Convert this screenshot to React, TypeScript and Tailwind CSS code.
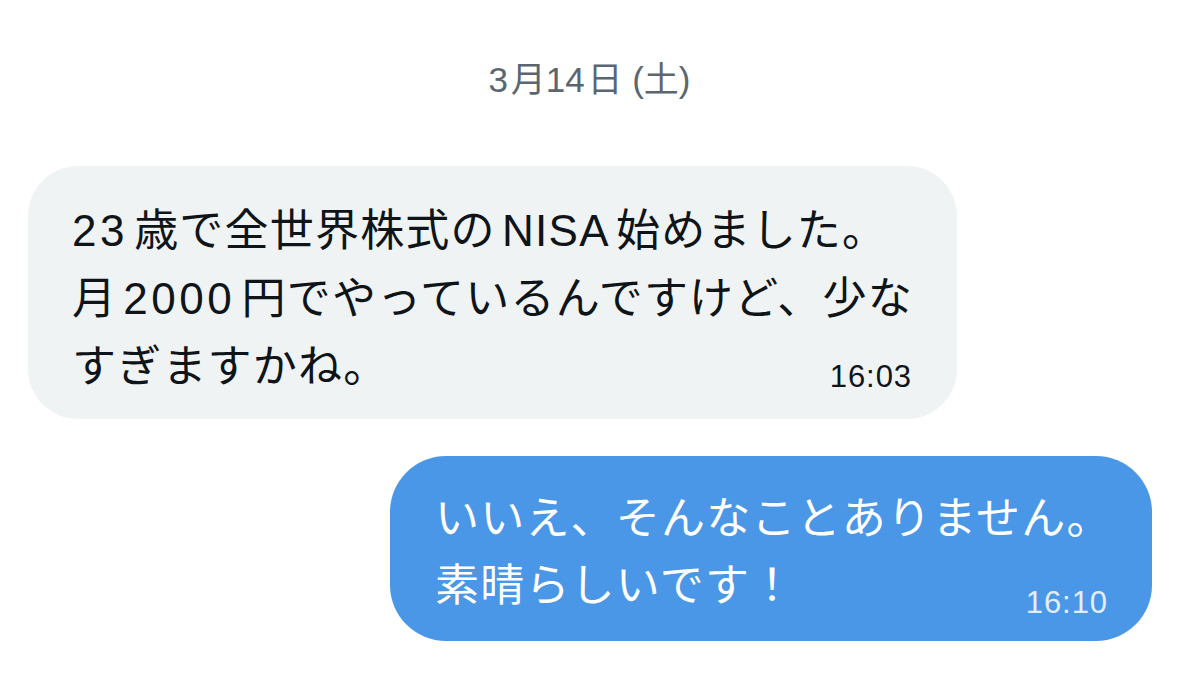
import React from "react"

const font = { fontFamily: '"Liberation Sans", "Noto Sans CJK JP", sans-serif' }

// latin runs get a little breathing room next to kana/kanji, like iOS does
const L: React.FC<{ children: React.ReactNode; first?: boolean; digits?: boolean }> = ({ children, first, digits }) => (
    <span
        className={[
            first ? "mr-[0.14em]" : "mx-[0.14em]",
            digits ? "tracking-[0.08em]" : "tracking-[0.03em]",
        ].join(" ")}
    >
        {children}
    </span>
)

const Received: React.FC<{ lines: React.ReactNode[]; time: string }> = ({ lines, time }) => {
    const last = lines[lines.length - 1]
    return (
        <div className="w-[929px] rounded-[50px] bg-[#eff3f4] pl-[44px] pr-[45px] pt-[31px] pb-[18px] text-[44px] leading-[68px] tracking-[1.2px] text-[#0f1419]">
            {lines.slice(0, -1).map((l, i) => (
                <div key={i} className="whitespace-nowrap">{l}</div>
            ))}
            <div className="flex items-end justify-between">
                <span className="whitespace-nowrap">{last}</span>
                <span className="text-[31px] leading-[36px] mb-[6px] tracking-[0.03em]">{time}</span>
            </div>
        </div>
    )
}

const Sent: React.FC<{ lines: React.ReactNode[]; time: string }> = ({ lines, time }) => {
    const last = lines[lines.length - 1]
    return (
        <div className="w-[762px] rounded-[56px] bg-[#4a97e7] pl-[45px] pr-[44px] pt-[29px] pb-[22px] text-[44px] leading-[67px] tracking-[1.2px] text-white">
            {lines.slice(0, -1).map((l, i) => (
                <div key={i} className="whitespace-nowrap">{l}</div>
            ))}
            <div className="flex items-end justify-between">
                <span className="whitespace-nowrap">{last}</span>
                <span className="text-[31px] leading-[36px] mb-[-2px] tracking-[0.03em] text-[#e3eefb]">{time}</span>
            </div>
        </div>
    )
}

export default function App() {
    return (
        <div className="w-[1179px] h-[683px] bg-white overflow-hidden flex flex-col" style={font}>
            <div className="pt-[57px] text-center text-[35px] leading-[46px] text-[#5b6670]">
                3<span className="ml-[0.08em]">月</span>14<span className="ml-[0.08em]">日</span> (土)
            </div>
            <div className="mt-[63px] pl-[28px] flex">
                <Received
                    lines={[
                        <><L first digits>23</L>歳で全世界株式の<L>NISA</L>始めました。</>,
                        <>月<L digits>2000</L>円でやっているんですけど、少な</>,
                        <>すぎますかね。</>,
                    ]}
                    time="16:03"
                />
            </div>
            <div className="mt-[37px] pr-[27px] flex justify-end">
                <Sent lines={[<>いいえ、そんなことありません。</>, <>素晴らしいです！</>]} time="16:10" />
            </div>
        </div>
    )
}
